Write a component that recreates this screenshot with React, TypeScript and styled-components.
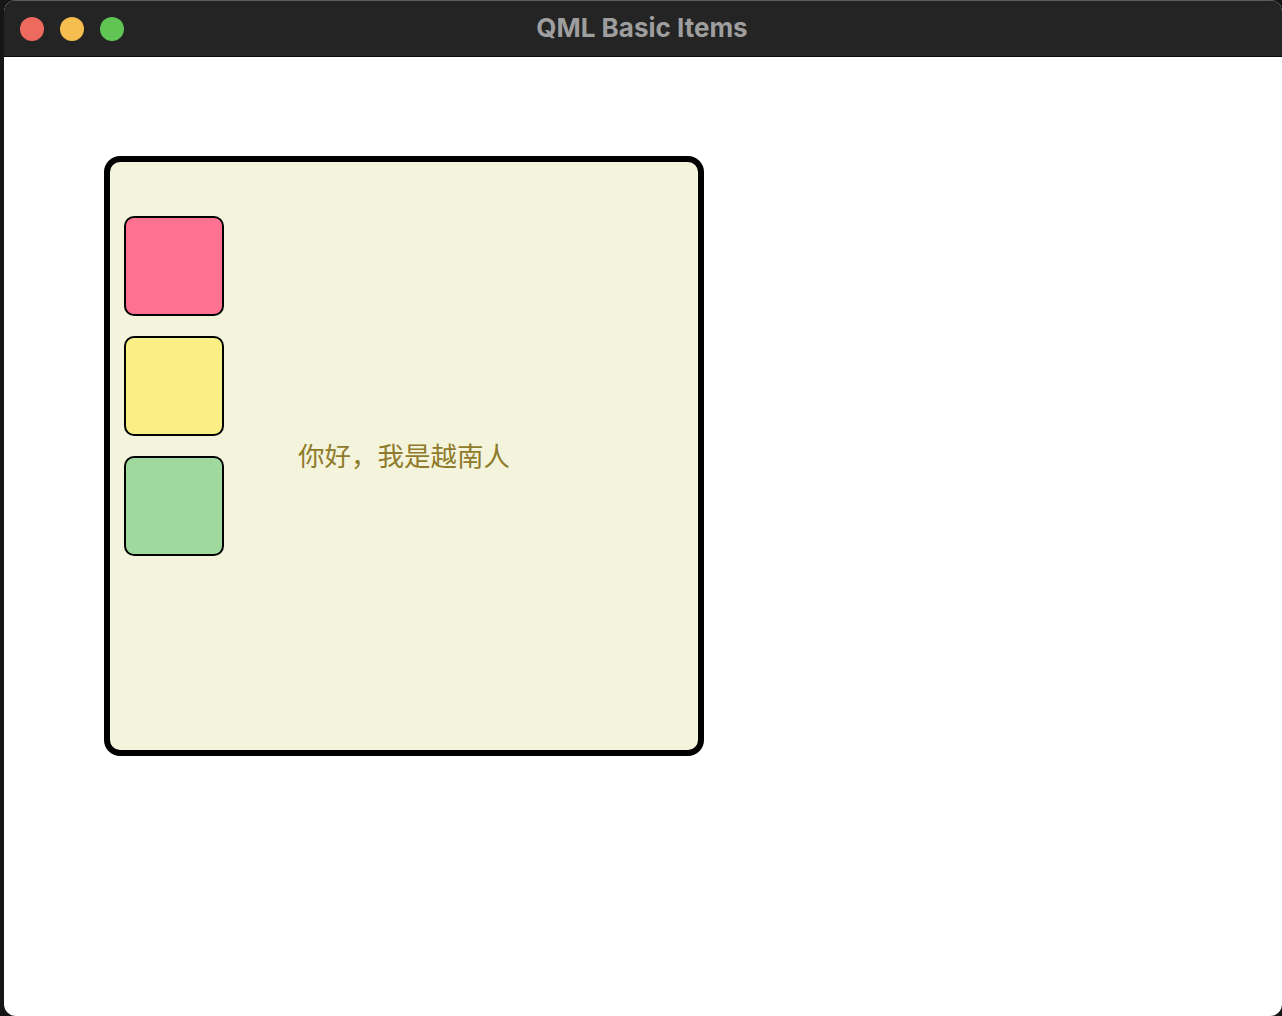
import React from "react";
import styled, { createGlobalStyle } from "styled-components";

const Global = createGlobalStyle`
  html, body { margin: 0; padding: 0; background: #161616; }
  body { font-family: Inter, "Noto Sans", sans-serif; }
`;

const Screen = styled.div`
  width: 1282px;
  height: 1016px;
  display: flex;
  padding-left: 4px;
  box-sizing: border-box;
  overflow: hidden;
`;

const Window = styled.div`
  flex: 1;
  display: flex;
  flex-direction: column;
  background: #ffffff;
  border-radius: 12px;
  overflow: hidden;
`;

const TitleBar = styled.div`
  flex: none;
  background: #242424;
  border-top: 1px solid #5c5c5c;
  border-bottom: 1px solid #0a0a0a;
  box-sizing: border-box;
  height: 57px;
  display: grid;
  grid-template-columns: 1fr auto 1fr;
  align-items: center;
  padding: 0 16px;
`;

const Lights = styled.div`
  display: flex;
  gap: 16px;
`;

const Light = styled.span<{ $c: string }>`
  width: 24px;
  height: 24px;
  border-radius: 50%;
  background: ${(p) => p.$c};
`;

const Title = styled.div`
  font-family: Inter, "Noto Sans", sans-serif;
  font-weight: 700;
  font-size: 26px;
  color: #9e9e9e;
  margin-top: -3px;
  margin-left: -2px;
`;

const Content = styled.div`
  flex: 1;
  padding: 99px 0 0 100px;
`;

const Panel = styled.div`
  width: 600px;
  height: 600px;
  box-sizing: border-box;
  border: 6px solid #000;
  border-radius: 16px;
  background: #f4f4dc;
  display: grid;
`;

const Column = styled.div`
  grid-area: 1 / 1;
  display: flex;
  flex-direction: column;
  gap: 20px;
  padding: 54px 0 0 14px;
`;

const Square = styled.div<{ $c: string }>`
  width: 100px;
  height: 100px;
  box-sizing: border-box;
  border: 2px solid #000;
  border-radius: 10px;
  background: ${(p) => p.$c};
`;

const Label = styled.div`
  grid-area: 1 / 1;
  place-self: center;
  font-family: "Noto Sans CJK SC", sans-serif;
  font-size: 26.5px;
  color: #8f7b2b;
  line-height: 1;
  margin-top: -2px;
`;

export default function App() {
  return (
    <>
      <Global />
      <Screen>
        <Window>
          <TitleBar>
            <Lights>
              <Light $c="#ee6a5f" />
              <Light $c="#f5be4f" />
              <Light $c="#61c554" />
            </Lights>
            <Title>QML Basic Items</Title>
            <div />
          </TitleBar>
          <Content>
            <Panel>
              <Column>
                <Square $c="#fe7190" />
                <Square $c="#f9ef85" />
                <Square $c="#a0d99e" />
              </Column>
              <Label>你好，我是越南人</Label>
            </Panel>
          </Content>
        </Window>
      </Screen>
    </>
  );
}
